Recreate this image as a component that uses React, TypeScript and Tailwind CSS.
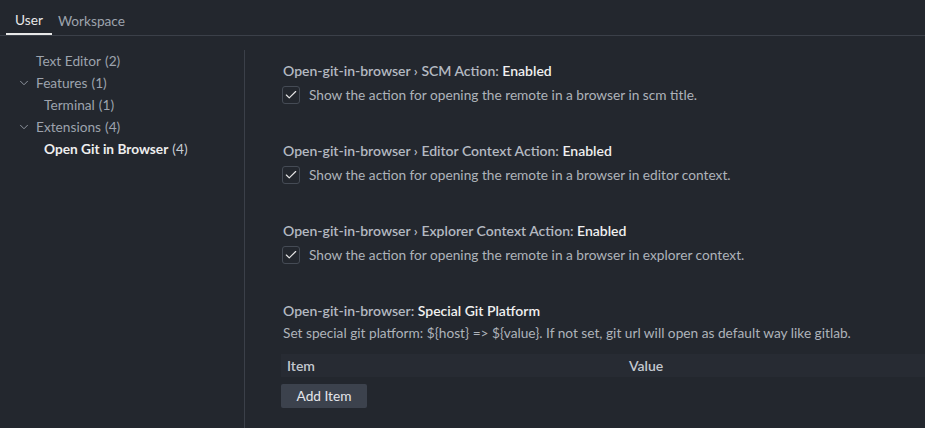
import { Check, ChevronDown } from 'lucide-react';

interface TreeItem {
  label: string;
  count: number;
  indent: number;
  chevron?: boolean;
  active?: boolean;
}

const tree: TreeItem[] = [
  { label: 'Text Editor', count: 2, indent: 36 },
  { label: 'Features', count: 1, indent: 36, chevron: true },
  { label: 'Terminal', count: 1, indent: 44 },
  { label: 'Extensions', count: 4, indent: 36, chevron: true },
  { label: 'Open Git in Browser', count: 4, indent: 44, active: true },
];

const checks = [
  { name: 'SCM Action', desc: 'Show the action for opening the remote in a browser in scm title.' },
  { name: 'Editor Context Action', desc: 'Show the action for opening the remote in a browser in editor context.' },
  { name: 'Explorer Context Action', desc: 'Show the action for opening the remote in a browser in explorer context.' },
];

export default function App() {
  return (
    <div
      className="w-[925px] h-[428px] overflow-hidden bg-[#23272e] text-[#abb2bf] text-[13.7px]"
      style={{ fontFamily: 'Lato, "Open Sans", sans-serif' }}
    >
      {/* Tabs */}
      <div className="flex pl-[6px] pt-[7px] border-b border-[#3b4049] h-[36px]">
        <div className="px-[9px] h-[28px] flex items-center text-[#e8e8e8] border-b-2 border-[#e8e8e8] mb-[-1px]">
          User
        </div>
        <div className="px-[6px] h-[28px] flex items-center text-[#9da3ad]">Workspace</div>
      </div>

      <div className="flex">
        {/* Tree */}
        <div className="w-[245px] shrink-0 pt-[14px] h-[392px]">
          <div className="border-r border-[#3b4049] h-[378px]">
            {tree.map((t) => (
              <div key={t.label} className="relative h-[22px] flex items-center" style={{ paddingLeft: t.indent }}>
                {t.chevron && (
                  <ChevronDown size={14} strokeWidth={1.5} className="absolute left-[17px] text-[#9da3ad]" />
                )}
                <span className={t.active ? 'font-bold text-[#eeeeee]' : 'text-[#9da3ad]'}>{t.label}</span>
                <span className={t.active ? 'ml-[4px] text-[#c8ccd2]' : 'ml-[4px] text-[#9da3ad]'}>({t.count})</span>
              </div>
            ))}
          </div>
        </div>

        {/* Settings */}
        <div className="flex-1 pl-[38px] pt-[25px]">
          {checks.map((c) => (
            <div key={c.name} className="h-[80px]">
              <div className="font-semibold text-[14px] text-[#b4b9c1] leading-[20px]">
                Open-git-in-browser › {c.name}: <span className="text-[#f0f0f0]">Enabled</span>
              </div>
              <div className="flex items-center gap-[9px] mt-[4px]">
                <div className="w-[18px] h-[18px] rounded-[3px] border border-[#454b55] flex items-center justify-center -ml-[1px]">
                  <Check size={14} strokeWidth={2} className="text-[#e6e6e6]" />
                </div>
                <span className="text-[#aeb3ba]">{c.desc}</span>
              </div>
            </div>
          ))}
          <div>
            <div className="font-semibold text-[14px] text-[#b4b9c1] leading-[20px]">
              Open-git-in-browser: <span className="text-[#f0f0f0]">Special Git Platform</span>
            </div>
            <div className="mt-[2px] text-[#aeb3ba] leading-[20px]">
              Set special git platform: {'${host}'} =&gt; {'${value}'}. If not set, git url will open as default way like gitlab.
            </div>
            <div className="flex items-center h-[23px] mt-[11px] -ml-[2px] bg-[#272b33] font-semibold text-[14px] text-[#c3c8cf]">
              <div className="w-[348px] pl-[6px]">Item</div>
              <div>Value</div>
            </div>
            <button className="mt-[7px] -ml-[2px] h-[24px] w-[86px] rounded-[2px] bg-[#3c424d] text-[#e4e6ea]">
              Add Item
            </button>
          </div>
        </div>
      </div>
    </div>
  );
}
